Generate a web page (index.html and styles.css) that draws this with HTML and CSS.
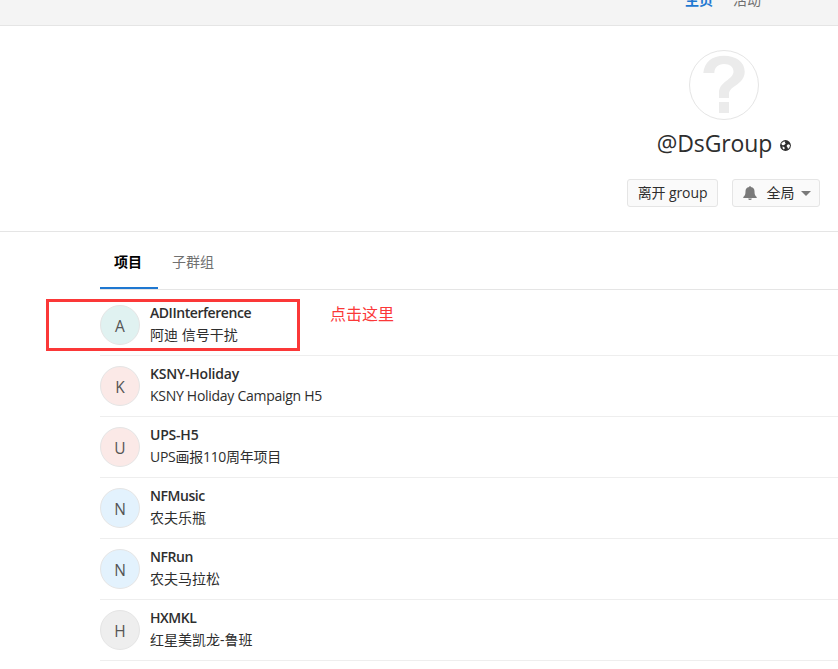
FILE: index.html
```html
<!DOCTYPE html>
<html lang="zh-CN">
<head>
<meta charset="utf-8">
<title>DsGroup</title>
<link rel="stylesheet" href="styles.css">
</head>
<body>
<nav class="top-nav"><a class="active">主页</a><a>活动</a></nav>
<header class="group-header">
  <div class="group-avatar">
    <svg width="68" height="68" viewBox="0 0 68 68"><path d="M13.300 22C14.300 11 22 4.700 34 4.700C46 4.700 54.700 11 54.700 20.500C54.700 34 39 34.500 39 43V47H29V42C29 30 43.500 29 43.500 20.500C43.500 16 40 13 34 13C28 13 24.500 16.500 24.300 22zM29 51h10v11H29z" fill="#ebebeb"/></svg>
  </div>
  <h1 class="group-title"><span>@DsGroup</span>
    <svg width="11" height="11" viewBox="0 0 10 10"><circle cx="5" cy="5" r="4.900" fill="#2e2e2e"/><path d="M1.200 3.200L3 1.500L4.800 1.300L4.500 2.500L5.200 3.200L3.800 4.500L2.700 4.800L1.800 4.500zM6.400 4.600L7.600 3.900L9.100 4.500L8.700 6.500L7.300 8.200L6.700 6.400L6 5.700zM2.200 6L3.800 6.400L4.400 7.400L3.500 8.600L2.500 7.800z" fill="#fff"/></svg>
  </h1>
  <div class="group-actions">
    <button class="btn btn-leave">离开 <span>group</span></button>
    <button class="btn btn-notify">
      <svg width="14" height="14" viewBox="0 0 14 14"><path d="M6.200 .9a.8.8 0 0 1 1.600 0C10.500 1.300 11.500 3 11.500 5.200C11.500 8.200 12 9.700 13.700 11v1H.3v-1C2 9.700 2.500 8.200 2.500 5.200C2.500 3 3.500 1.300 6.200 .9zM5.200 12.400h3.600a1.800 1.600 0 0 1-3.600 0z" fill="#7a7a7a"/></svg>
      <span class="level">全局</span>
      <i class="caret"></i>
    </button>
  </div>
</header>
<main class="content">
  <div class="tabs"><a class="tab selected">项目</a><a class="tab">子群组</a></div>
  <ul class="projects">
    <li><div class="avatar teal">A</div><div class="info"><b class="long">ADIInterference</b><p>阿迪 信号干扰</p></div><div class="highlight"></div><div class="note">点击这里</div></li>
    <li><div class="avatar red">K</div><div class="info"><b>KSNY-Holiday</b><p class="latin">KSNY Holiday Campaign H5</p></div></li>
    <li><div class="avatar red">U</div><div class="info"><b>UPS-H5</b><p class="latin">UPS画报110周年项目</p></div></li>
    <li><div class="avatar blue">N</div><div class="info"><b class="long">NFMusic</b><p>农夫乐瓶</p></div></li>
    <li><div class="avatar blue">N</div><div class="info"><b class="long">NFRun</b><p>农夫马拉松</p></div></li>
    <li><div class="avatar gray">H</div><div class="info"><b class="long">HXMKL</b><p>红星美凯龙-鲁班</p></div></li>
  </ul>
</main>
</body>
</html>
```
FILE: styles.css
```css
* { box-sizing: border-box; }
html { overflow: hidden; }
body {
  margin: 0;
  height: 669px;
  overflow: hidden;
  background: #fff;
  color: #2e2e2e;
  font: 14px/20px "Open Sans", "Noto Sans CJK SC", sans-serif;
}
.top-nav {
  width: 1448px;
  height: 26px;
  display: flex;
  justify-content: center;
  gap: 20px;
  background: #f4f4f4;
  border-bottom: 1px solid #e5e5e5;
  color: #707070;
}
.top-nav a { margin: -10px 1px 0 -1px; }
.top-nav .active { color: #1f78d1; font-weight: 600; }
.group-header {
  width: 1448px;
  height: 206px;
  padding-top: 24px;
  display: flex;
  flex-direction: column;
  align-items: center;
  border-bottom: 1px solid #e5e5e5;
}
.group-avatar {
  width: 70px;
  height: 70px;
  border: 1px solid #e5e5e5;
  border-radius: 50%;
  overflow: hidden;
}
.group-title {
  display: flex;
  align-items: center;
  gap: 8px;
  margin: 7px 0 0;
  font-size: 23px;
  line-height: 32px;
  font-weight: 400;
  letter-spacing: -0.1px;
}
.group-title svg { margin-top: 5px; }
.group-actions { display: flex; gap: 14px; margin: 20px 0 0 -1px; }
.btn {
  height: 28px;
  display: flex;
  align-items: center;
  padding: 0;
  justify-content: center;
  background: #fafafa;
  border: 1px solid #e5e5e5;
  border-radius: 3px;
  color: #2e2e2e;
  font: inherit;
  white-space: pre;
}
.btn-leave { width: 91px; letter-spacing: -0.1px; }
.btn-notify { width: 88px; }
.level { margin: 0 6px 0 10px; }
.caret {
  border: 5px solid transparent;
  border-top-color: #7a7a7a;
  border-bottom: 0;
}
.btn-notify svg { margin-left: 1px; }
.content { margin-left: 100px; }
.tabs {
  height: 58px;
  display: flex;
  border-bottom: 1px solid #e5e5e5;
}
.tab { height: 57px; padding: 20px 16px 0 14px; color: #707070; }
.tab.selected {
  color: #000;
  font-weight: 600;
  border-bottom: 2px solid #1f78d1;
}
.projects { list-style: none; margin: 0; padding: 5px 0 0; }
.projects li {
  position: relative;
  height: 61px;
  padding: 10px 0;
  display: flex;
  gap: 10px;
  border-bottom: 1px solid #eee;
}
.avatar {
  width: 40px;
  height: 40px;
  border: 1px solid #e5e5e5;
  border-radius: 50%;
  text-align: center;
  font-size: 15.500px;
  line-height: 40px;
  color: #555;
}
.teal { background: #e0f2f1; }
.red { background: #fbe9e7; }
.blue { background: #e3f2fd; }
.gray { background: #eee; }
.info b { display: block; font-weight: 600; margin-top: -2px; letter-spacing: -0.22px; }
.info .long { letter-spacing: -0.45px; }
.info p { margin: 2px 0 0; }
.info .latin { letter-spacing: -0.28px; }
.highlight {
  position: absolute;
  left: -54px;
  top: 4px;
  width: 254px;
  height: 52px;
  border: 3px solid #fb3838;
}
.note {
  position: absolute;
  left: 230px;
  top: 7px;
  color: #fb3838;
  font-size: 16px;
  line-height: 24px;
}
```
